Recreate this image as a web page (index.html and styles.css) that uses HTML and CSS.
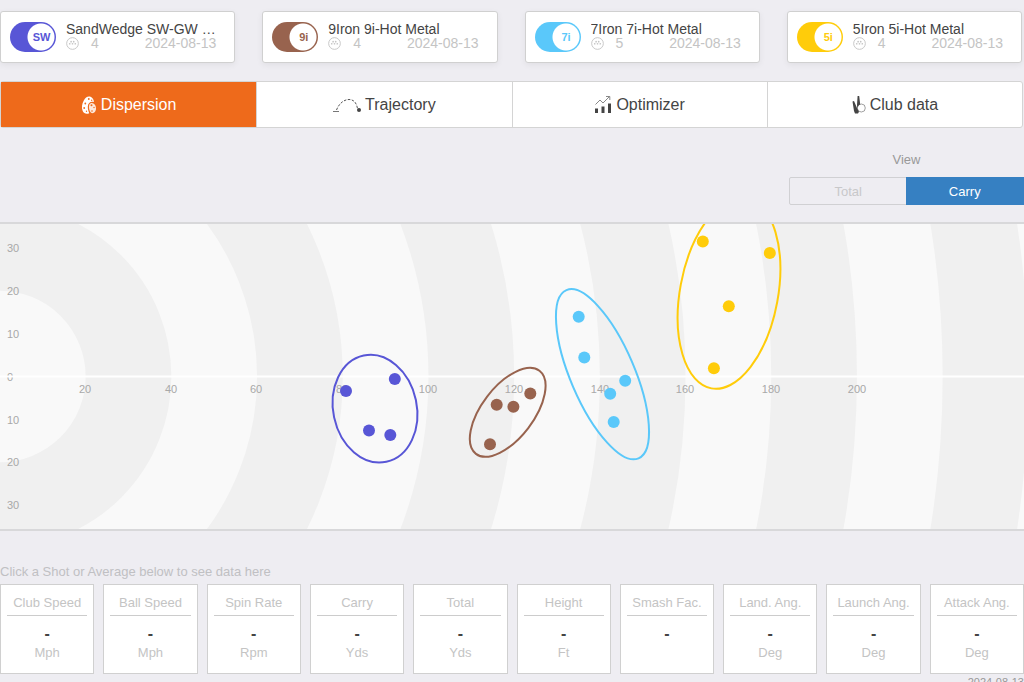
FILE: index.html
```html
<!DOCTYPE html>
<html lang="en">
<head>
<meta charset="utf-8">
<meta name="viewport" content="width=device-width, initial-scale=1">
<title>Dispersion</title>
<link rel="stylesheet" href="styles.css">
</head>
<body>
<svg class="defs" aria-hidden="true">
  <symbol id="balls" viewBox="0 0 14 14">
    <circle cx="7" cy="7" r="6.300" fill="none" stroke="currentColor"/>
    <g fill="currentColor"><circle cx="5.500" cy="5" r=".9"/><circle cx="8.300" cy="5" r=".9"/><circle cx="4" cy="7.300" r=".9"/><circle cx="7" cy="7.300" r=".9"/><circle cx="10" cy="7.300" r=".9"/></g>
  </symbol>
</svg>
<main class="page">
  <section class="clubs" aria-label="Clubs">
    <article class="club club-sw">
      <label class="switch"><input type="checkbox" role="switch" checked><span>SW</span></label>
      <div class="club-info">
        <div class="club-name">SandWedge SW-GW …</div>
        <div class="club-meta"><svg><use href="#balls"/></svg><span>4</span><time>2024-08-13</time></div>
      </div>
    </article>
    <article class="club club-9i">
      <label class="switch"><input type="checkbox" role="switch" checked><span>9i</span></label>
      <div class="club-info">
        <div class="club-name">9Iron 9i-Hot Metal</div>
        <div class="club-meta"><svg><use href="#balls"/></svg><span>4</span><time>2024-08-13</time></div>
      </div>
    </article>
    <article class="club club-7i">
      <label class="switch"><input type="checkbox" role="switch" checked><span>7i</span></label>
      <div class="club-info">
        <div class="club-name">7Iron 7i-Hot Metal</div>
        <div class="club-meta"><svg><use href="#balls"/></svg><span>5</span><time>2024-08-13</time></div>
      </div>
    </article>
    <article class="club club-5i">
      <label class="switch"><input type="checkbox" role="switch" checked><span>5i</span></label>
      <div class="club-info">
        <div class="club-name">5Iron 5i-Hot Metal</div>
        <div class="club-meta"><svg><use href="#balls"/></svg><span>4</span><time>2024-08-13</time></div>
      </div>
    </article>
  </section>

  <nav class="tabs">
    <button class="tab active" type="button">
      <svg width="16" height="20" viewBox="0 0 16 20"><path d="M8 1.500c2.800 0 4.800 2.500 5 5.500-3.500-.8-6 1-6.200 4.500-.1 2.500.6 4.500 1.400 6.700C5.500 19.500 2.800 18.500 1.700 16 .3 13 1 8.500 2.800 5.500 4.200 3 5.800 1.500 8 1.500Z" fill="#fff"/><path d="M10.500 8c2.500-.2 4.300 2.200 4.500 5 .2 2.800-1.500 5.200-3.700 5.200-1.800 0-2.800-2.200-3.200-4.700C7.700 10.800 8.300 8.200 10.500 8Z" fill="#fff" fill-opacity=".85"/><g fill="#ee6a1b"><circle cx="7.800" cy="4" r=".9"/><circle cx="4.300" cy="8.500" r=".9"/><circle cx="10.700" cy="5.200" r=".7"/><circle cx="3.200" cy="13" r=".9"/><circle cx="10.500" cy="10.300" r="1"/><circle cx="5.500" cy="16.300" r=".7"/><circle cx="13" cy="12.500" r=".7"/><circle cx="11" cy="16" r=".8"/></g></svg>
      <span>Dispersion</span></button>
    <button class="tab" type="button">
      <svg width="28" height="18" viewBox="0 0 28 18"><path d="M3.500 14C6 7.500 11 3.500 16 3.500c5 0 7.500 3.500 8.500 9" fill="none" stroke="#555" stroke-dasharray="2.500 1.500"/><path d="M0 15.500h6" stroke="#777"/><circle cx="26" cy="14" r="2" fill="#444"/></svg>
      <span>Trajectory</span></button>
    <button class="tab" type="button">
      <svg width="18" height="20" viewBox="0 0 18 20"><path d="M1.500 9.500 6 5l3 3L15.500 1.500M12 1.500h3.800V5" fill="none" stroke="#888"/><path d="M2.500 18v-4.500M9 18v-6.500M15.500 18V8.500" stroke="#444" stroke-width="3"/></svg>
      <span>Optimizer</span></button>
    <button class="tab" type="button">
      <svg width="14" height="20" viewBox="0 0 14 20"><circle cx="9.300" cy="13" r="4" fill="#fff" stroke="#888" stroke-width=".8"/><path d="M5.600 1h1.600l1 8.500C6.600 10 5.500 11.500 5.200 13.200L5 10Z" fill="#444"/><path d="m.5 6.500 1.500-.5 3 7 2 3.800-1 1.700H3L2 16Z" fill="#444"/></svg>
      <span>Club data</span></button>
  </nav>

  <section class="view" aria-label="View">
    <div class="view-label">View</div>
    <div class="segmented">
      <button type="button">Total</button>
      <button type="button" class="on">Carry</button>
    </div>
  </section>

  <svg class="chart" viewBox="0 224 1024 305" role="img" aria-label="Shot dispersion">
    <rect y="223" width="1024" height="307" fill="#f9f9f9"/>
    <g class="rings">
      <circle cy="376.500" r="128.500"/><circle cy="376.500" r="299.900"/><circle cy="376.500" r="471.300"/><circle cy="376.500" r="642.700"/><circle cy="376.500" r="814.100"/><circle cy="376.500" r="985.500"/>
    </g>
    <g class="axis-y">
      <text x="7" y="252">30</text><text x="7" y="295">20</text><text x="7" y="338">10</text><text x="7" y="381">0</text><text x="7" y="424">10</text><text x="7" y="466">20</text><text x="7" y="509">30</text>
    </g>
    <g class="axis-x">
      <text x="85" y="393">20</text><text x="171" y="393">40</text><text x="256" y="393">60</text><text x="342" y="393">80</text><text x="428" y="393">100</text><text x="514" y="393">120</text><text x="600" y="393">140</text><text x="685" y="393">160</text><text x="771" y="393">180</text><text x="857" y="393">200</text>
    </g>
    <path d="M0 376.500h1024" stroke="#fff" stroke-width="2"/>
    <g class="shots club-sw">
      <ellipse rx="41.800" ry="54.300" transform="translate(375 408.700) rotate(-12)"/>
      <circle cx="346" cy="391" r="6"/><circle cx="394.800" cy="379" r="6"/><circle cx="369" cy="430.600" r="6"/><circle cx="390.300" cy="435" r="6"/>
    </g>
    <g class="shots club-9i">
      <ellipse rx="25.900" ry="52.300" transform="translate(507.700 412.300) rotate(37.400)"/>
      <circle cx="496.700" cy="404.700" r="6"/><circle cx="513.400" cy="406.800" r="6"/><circle cx="530.300" cy="393.600" r="6"/><circle cx="490" cy="444.200" r="6"/>
    </g>
    <g class="shots club-7i">
      <ellipse rx="32" ry="91.500" transform="translate(602.500 374.200) rotate(-23.200)"/>
      <circle cx="578.700" cy="316.700" r="6"/><circle cx="584.300" cy="357.600" r="6"/><circle cx="625.200" cy="380.700" r="6"/><circle cx="610.200" cy="393.700" r="6"/><circle cx="613.700" cy="422" r="6"/>
    </g>
    <g class="shots club-5i">
      <ellipse rx="49" ry="96.700" transform="translate(729 293.300) rotate(10.500)"/>
      <circle cx="702.800" cy="241.400" r="6"/><circle cx="769.800" cy="253.100" r="6"/><circle cx="728.800" cy="306.300" r="6"/><circle cx="713.900" cy="368.300" r="6"/>
    </g>
  </svg>

  <p class="hint">Click a Shot or Average below to see data here</p>
  <section class="stats" aria-label="Shot data">
    <div class="stat"><h2>Club Speed</h2><strong>-</strong><span>Mph</span></div>
    <div class="stat"><h2>Ball Speed</h2><strong>-</strong><span>Mph</span></div>
    <div class="stat"><h2>Spin Rate</h2><strong>-</strong><span>Rpm</span></div>
    <div class="stat"><h2>Carry</h2><strong>-</strong><span>Yds</span></div>
    <div class="stat"><h2>Total</h2><strong>-</strong><span>Yds</span></div>
    <div class="stat"><h2>Height</h2><strong>-</strong><span>Ft</span></div>
    <div class="stat"><h2>Smash Fac.</h2><strong>-</strong></div>
    <div class="stat"><h2>Land. Ang.</h2><strong>-</strong><span>Deg</span></div>
    <div class="stat"><h2>Launch Ang.</h2><strong>-</strong><span>Deg</span></div>
    <div class="stat"><h2>Attack Ang.</h2><strong>-</strong><span>Deg</span></div>
  </section>
  <time class="session-date">2024-08-13</time>
</main>
</body>
</html>
```
FILE: styles.css
```css
* { box-sizing: border-box; }

html { scrollbar-width: none; }

body {
  margin: 0;
  background: #eeedf2;
  color: #444;
  font-family: "Liberation Sans", Arial, Helvetica, sans-serif;
  font-size: 14px;
}

button {
  font: inherit;
  color: inherit;
  padding: 0;
  cursor: pointer;
}

.defs { display: none; }

.page { display: flex; flex-direction: column; }

.club-sw { --club: #5856d6; }
.club-9i { --club: #98634e; }
.club-7i { --club: #5ac8fa; }
.club-5i { --club: #ffcc0a; }

.clubs {
  display: grid;
  grid-template-columns: repeat(4, minmax(0, 1fr));
  gap: 27px;
  padding: 11px 2px 0 0;
}

.club {
  display: flex;
  align-items: center;
  gap: 10px;
  height: 52px;
  padding: 0 18px 0 9px;
  background: #fff;
  border: 1px solid #d0d0d0;
  border-radius: 3px;
  box-shadow: 0 2px 6px rgba(0, 0, 0, .06);
}

.switch {
  position: relative;
  flex: none;
  width: 46px;
  height: 30px;
  cursor: pointer;
}

.switch input {
  appearance: none;
  display: block;
  width: 100%;
  height: 100%;
  margin: 0;
  border-radius: 15px;
  background: radial-gradient(circle at 31px 15px, #fff 13px, var(--club) 14px);
}

.switch span {
  position: absolute;
  inset: 0 0 0 17px;
  display: grid;
  place-items: center;
  color: var(--club);
  font-size: 11px;
  font-weight: bold;
}

.club-info { flex: 1; min-width: 0; padding-bottom: 4px; }

.club-name {
  overflow: hidden;
  white-space: nowrap;
  text-overflow: ellipsis;
  line-height: 16px;
}

.club-meta {
  display: flex;
  align-items: center;
  color: #c4c4c4;
  line-height: 12px;
}

.club-meta svg { width: 13px; height: 13px; margin-right: 12px; }
.club-meta time { margin-left: auto; }

.tabs {
  display: grid;
  grid-template-columns: repeat(4, 1fr);
  margin: 18px 1px 0 0;
  background: #fff;
  border: 1px solid #d4d4d4;
  border-radius: 3px;
}

.tab {
  display: flex;
  align-items: center;
  justify-content: center;
  gap: 4px;
  height: 45px;
  border: 0;
  background: none;
  font-size: 16px;
}

.tab + .tab { border-left: 1px solid #d4d4d4; }
.tab.active { background: #ee6a1b; color: #fff; }

.view {
  align-self: flex-end;
  width: 235px;
  margin-top: 24px;
}

.view-label { text-align: center; line-height: 16px; color: #999; font-size: 13px; }

.segmented {
  display: grid;
  grid-template-columns: repeat(2, 1fr);
  margin-top: 9px;
  border: 1px solid #d0d0d3;
  border-radius: 2px;
}

.segmented button {
  height: 26px;
  border: 0;
  background: none;
  color: #c8c8ca;
  font-size: 13px;
}

.segmented .on {
  margin: -1px;
  height: 28px;
  background: #3680c2;
  color: #fff;
}

.chart {
  display: block;
  width: 100%;
  margin-top: 17px;
  border: solid #d8d8da;
  border-width: 2px 0;
}

.rings circle { fill: none; stroke: #f0f0f0; stroke-width: 85.7px; }

.chart text { font-size: 11px; fill: #a8a8a8; }
.axis-x { text-anchor: middle; }

.shots ellipse { fill: none; stroke: var(--club); stroke-width: 2px; }
.shots circle { fill: var(--club); }

.hint { margin: 33px 0 4px; line-height: 16px; color: #c0c0c3; font-size: 13px; }

.stats {
  display: grid;
  grid-template-columns: repeat(10, minmax(0, 1fr));
  gap: 9px;
}

.stat {
  height: 90px;
  padding: 9px 6px 0;
  background: #fff;
  border: 1px solid #d0d0d0;
  text-align: center;
  color: #c4c4c4;
}

.stat h2 {
  margin: 0 0 8px;
  padding-bottom: 3px;
  border-bottom: 1px solid #ccc;
  font-size: 13px;
  font-weight: normal;
  line-height: 18px;
  white-space: nowrap;
}

.stat strong, .stat span { display: block; line-height: 18px; }
.stat strong { color: #444; font-size: 16px; line-height: 20px; }
.stat span { font-size: 13px; }

.session-date {
  align-self: flex-end;
  margin-top: 2px;
  color: #999;
  font-size: 11px;
}
```
